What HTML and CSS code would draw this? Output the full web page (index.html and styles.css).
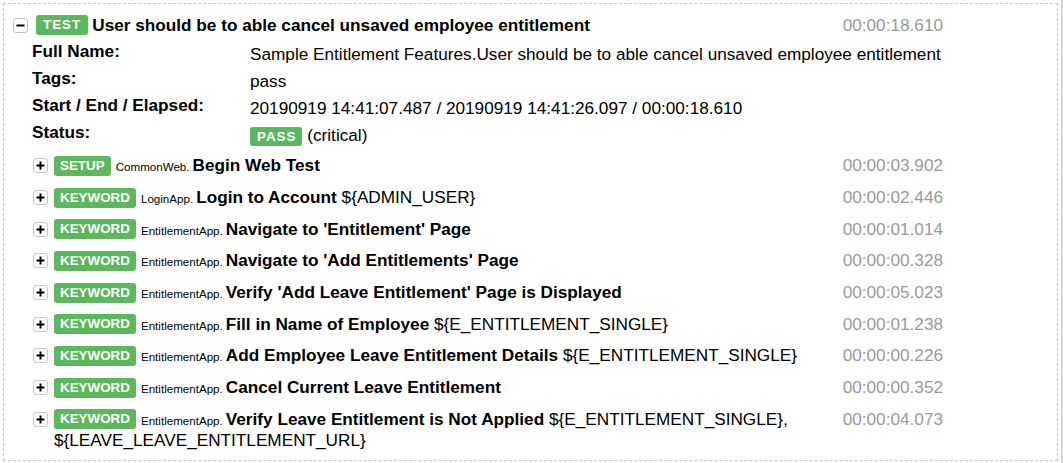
FILE: index.html
```html
<!DOCTYPE html>
<html>
<head>
<meta charset="utf-8">
<link rel="stylesheet" href="styles.css">
</head>
<body>
<div class="page">
  <div class="test">
    <div class="row hdr">
      <span class="tog"><svg viewBox="0 0 9 9" width="9" height="9"><path d="M0.5 4.5H8.5" stroke="#000" stroke-width="2"/></svg></span>
      <div class="name"><span class="lbl spaced">TEST</span><span class="kname">User should be to able cancel unsaved employee entitlement</span></div>
      <span class="elapsed">00:00:18.610</span>
    </div>
    <div class="meta">
      <div class="k">Full Name:</div><div class="v">Sample Entitlement Features.User should be to able cancel unsaved employee entitlement</div>
      <div class="k">Tags:</div><div class="v">pass</div>
      <div class="k">Start / End / Elapsed:</div><div class="v">20190919 14:41:07.487 / 20190919 14:41:26.097 / 00:00:18.610</div>
      <div class="k">Status:</div><div class="v"><span class="lbl spaced pass">PASS</span> (critical)</div>
    </div>
    <div class="kws">
    <div class="row kw">
      <span class="tog"><svg viewBox="0 0 9 9" width="9" height="9"><path d="M0.5 4.5H8.5M4.5 0.5V8.5" stroke="#000" stroke-width="2"/></svg></span>
      <div class="name"><span class="lbl">SETUP</span><span class="parent">CommonWeb.</span><span class="kname">Begin Web Test</span></div>
      <span class="elapsed">00:00:03.902</span>
    </div>
    <div class="row kw">
      <span class="tog"><svg viewBox="0 0 9 9" width="9" height="9"><path d="M0.5 4.5H8.5M4.5 0.5V8.5" stroke="#000" stroke-width="2"/></svg></span>
      <div class="name"><span class="lbl">KEYWORD</span><span class="parent">LoginApp.</span><span class="kname">Login to Account</span> ${ADMIN_USER}</div>
      <span class="elapsed">00:00:02.446</span>
    </div>
    <div class="row kw">
      <span class="tog"><svg viewBox="0 0 9 9" width="9" height="9"><path d="M0.5 4.5H8.5M4.5 0.5V8.5" stroke="#000" stroke-width="2"/></svg></span>
      <div class="name"><span class="lbl">KEYWORD</span><span class="parent">EntitlementApp.</span><span class="kname">Navigate to 'Entitlement' Page</span></div>
      <span class="elapsed">00:00:01.014</span>
    </div>
    <div class="row kw">
      <span class="tog"><svg viewBox="0 0 9 9" width="9" height="9"><path d="M0.5 4.5H8.5M4.5 0.5V8.5" stroke="#000" stroke-width="2"/></svg></span>
      <div class="name"><span class="lbl">KEYWORD</span><span class="parent">EntitlementApp.</span><span class="kname">Navigate to 'Add Entitlements' Page</span></div>
      <span class="elapsed">00:00:00.328</span>
    </div>
    <div class="row kw">
      <span class="tog"><svg viewBox="0 0 9 9" width="9" height="9"><path d="M0.5 4.5H8.5M4.5 0.5V8.5" stroke="#000" stroke-width="2"/></svg></span>
      <div class="name"><span class="lbl">KEYWORD</span><span class="parent">EntitlementApp.</span><span class="kname">Verify 'Add Leave Entitlement' Page is Displayed</span></div>
      <span class="elapsed">00:00:05.023</span>
    </div>
    <div class="row kw">
      <span class="tog"><svg viewBox="0 0 9 9" width="9" height="9"><path d="M0.5 4.5H8.5M4.5 0.5V8.5" stroke="#000" stroke-width="2"/></svg></span>
      <div class="name"><span class="lbl">KEYWORD</span><span class="parent">EntitlementApp.</span><span class="kname">Fill in Name of Employee</span> ${E_ENTITLEMENT_SINGLE}</div>
      <span class="elapsed">00:00:01.238</span>
    </div>
    <div class="row kw">
      <span class="tog"><svg viewBox="0 0 9 9" width="9" height="9"><path d="M0.5 4.5H8.5M4.5 0.5V8.5" stroke="#000" stroke-width="2"/></svg></span>
      <div class="name"><span class="lbl">KEYWORD</span><span class="parent">EntitlementApp.</span><span class="kname">Add Employee Leave Entitlement Details</span> ${E_ENTITLEMENT_SINGLE}</div>
      <span class="elapsed">00:00:00.226</span>
    </div>
    <div class="row kw">
      <span class="tog"><svg viewBox="0 0 9 9" width="9" height="9"><path d="M0.5 4.5H8.5M4.5 0.5V8.5" stroke="#000" stroke-width="2"/></svg></span>
      <div class="name"><span class="lbl">KEYWORD</span><span class="parent">EntitlementApp.</span><span class="kname">Cancel Current Leave Entitlement</span></div>
      <span class="elapsed">00:00:00.352</span>
    </div>
    <div class="row kw">
      <span class="tog"><svg viewBox="0 0 9 9" width="9" height="9"><path d="M0.5 4.5H8.5M4.5 0.5V8.5" stroke="#000" stroke-width="2"/></svg></span>
      <div class="name"><span class="lbl">KEYWORD</span><span class="parent">EntitlementApp.</span><span class="kname">Verify Leave Entitlement is Not Applied</span> ${E_ENTITLEMENT_SINGLE}, ${LEAVE_LEAVE_ENTITLEMENT_URL}</div>
      <span class="elapsed">00:00:04.073</span>
    </div>
    </div>
  </div>
</div>
</body>
</html>
```

FILE: styles.css
```css
html, body {
  margin: 0;
  padding: 0;
  background: #fff;
}
body {
  font-family: "Liberation Sans", Arial, Helvetica, sans-serif;
  font-size: 17.2px;
  color: #000;
}
.page {
  box-sizing: border-box;
  width: 1063px;
  height: 463px;
  padding: 3px 0 0 3px;
  border-right: 2px solid #d4d4d4;
}
.test {
  box-sizing: border-box;
  width: 1055px;
  border: 1px dashed #c8c8c8;
  padding-bottom: 4px;
}
.row {
  display: flex;
  align-items: flex-start;
  line-height: 21px;
}
.hdr {
  padding: 10.5px 0 5px 9px;
}
.kws {
  padding-top: 1.5px;
}
.kw {
  padding: 5.35px 0 5.35px 29px;
}
.tog {
  flex: none;
  box-sizing: border-box;
  width: 15px;
  height: 15px;
  margin-top: 3px;
  border: 1px solid #c4c4c4;
  border-radius: 3px;
  background: #fff;
  display: flex;
  align-items: center;
  justify-content: center;
}
.tog svg {
  display: block;
}
.hdr .tog {
  margin-right: 8px;
}
.kw .tog {
  margin-right: 6px;
}
.name {
  flex: 1;
  min-width: 0;
}
.lbl {
  display: inline-block;
  vertical-align: top;
  height: 20px;
  line-height: 20px;
  margin-top: 0.5px;
  padding: 0 6px;
  border-radius: 3px;
  background: #5cb85c;
  color: #fff;
  font-size: 13.4px;
  font-weight: bold;
  margin-right: 5px;
}
.hdr .lbl {
  margin-right: 4px;
  padding: 0 7px;
}
.spaced {
  letter-spacing: 1px;
}
.pass {
  height: 19px;
  line-height: 19px;
  margin-top: 2px;
  padding: 0 6px 0 7px;
  margin-right: 0;
}
.parent {
  font-size: 11.6px;
  line-height: 1;
  margin-right: 3px;
}
.kname {
  font-weight: bold;
}
.elapsed {
  flex: none;
  width: 102px;
  margin-left: 16px;
  margin-right: 114px;
  text-align: right;
  color: #9a9a9a;
}
.meta {
  display: grid;
  grid-template-columns: 218px 1fr;
  grid-auto-rows: 27px;
  padding-left: 28px;
  line-height: 21px;
}
.k {
  font-weight: bold;
}
.v {
  padding-top: 3px;
  white-space: nowrap;
}
```
